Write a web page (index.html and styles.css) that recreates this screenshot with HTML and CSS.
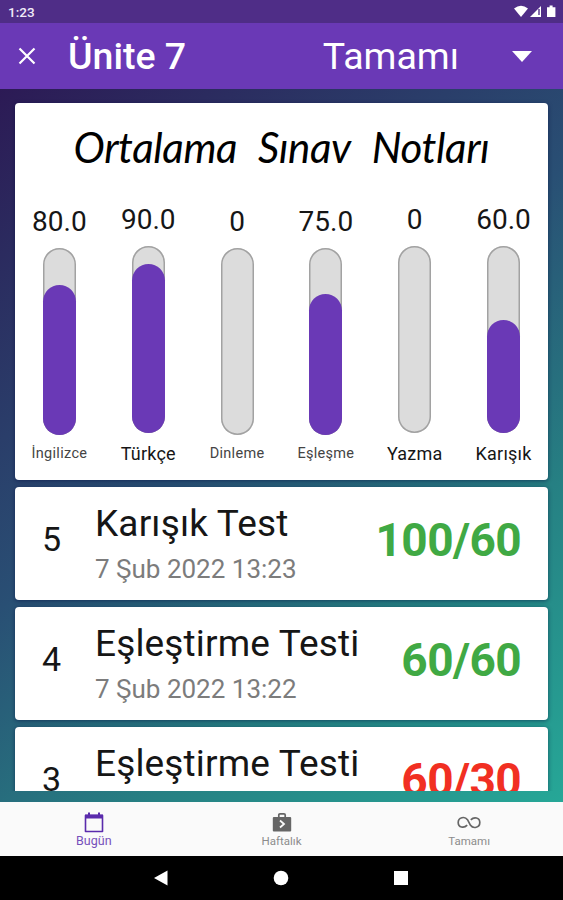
FILE: index.html
```html
<!DOCTYPE html>
<html lang="tr">
<head>
  <meta charset="UTF-8">
  <title>Ünite 7</title>
  <link rel="stylesheet" href="styles.css">
</head>
<body>

  <div class="status-bar">
    <span>1:23</span>
    <svg class="status-icons" width="44" height="16" viewBox="0 0 44 16">
      <path d="M1 4.5Q8 -1 15 4.5L8 13z" fill="#fff"/>
      <path d="M17 13L28 2V13z" fill="#fff"/>
      <path d="M26 5V11" stroke="#4f2d87" stroke-width="1.4"/>
      <path d="M34 3.2h2.6V1.6h3v1.6H42.4V13H34z" fill="#fff"/>
    </svg>
  </div>

  <header class="app-bar">
    <svg class="close" width="18" height="18" viewBox="0 0 18 18">
      <path d="M1.5 1.5L16.5 16.5M16.5 1.5L1.5 16.5" stroke="#fff" stroke-width="2.2"/>
    </svg>
    <h1>Ünite 7</h1>
    <span class="filter">Tamamı</span>
    <svg class="arrow" width="20" height="11" viewBox="0 0 20 11">
      <path d="M0 0H20L10 11z" fill="#fff"/>
    </svg>
  </header>

  <main class="content">
    <div class="list">
      <section class="card chart-card">
        <h2><span>Ortalama</span> <span>Sınav</span> <span>Notları</span></h2>
        <div class="chart">
          <div class="col">
            <span class="value">80.0</span>
            <div class="bar"><div class="fill" style="height:80%"></div></div>
            <span class="label small">İngilizce</span>
          </div>
          <div class="col">
            <span class="value">90.0</span>
            <div class="bar"><div class="fill" style="height:90%"></div></div>
            <span class="label">Türkçe</span>
          </div>
          <div class="col">
            <span class="value">0</span>
            <div class="bar"></div>
            <span class="label small">Dinleme</span>
          </div>
          <div class="col">
            <span class="value">75.0</span>
            <div class="bar"><div class="fill" style="height:75%"></div></div>
            <span class="label small">Eşleşme</span>
          </div>
          <div class="col">
            <span class="value">0</span>
            <div class="bar"></div>
            <span class="label">Yazma</span>
          </div>
          <div class="col">
            <span class="value">60.0</span>
            <div class="bar"><div class="fill" style="height:60%"></div></div>
            <span class="label">Karışık</span>
          </div>
        </div>
      </section>

      <article class="card test">
        <span class="no">5</span>
        <div class="info">
          <h3>Karışık Test</h3>
          <p>7 Şub 2022 13:23</p>
        </div>
        <strong class="score">100/60</strong>
      </article>

      <article class="card test">
        <span class="no">4</span>
        <div class="info">
          <h3>Eşleştirme Testi</h3>
          <p>7 Şub 2022 13:22</p>
        </div>
        <strong class="score">60/60</strong>
      </article>

      <article class="card test">
        <span class="no">3</span>
        <div class="info">
          <h3>Eşleştirme Testi</h3>
        </div>
        <strong class="score fail">60/30</strong>
      </article>
    </div>
  </main>

  <nav class="tabs">
    <div class="tab active">
      <svg width="20" height="22" viewBox="0 0 20 22">
        <path d="M1.5 4.5H18.5V20.5H1.5z" fill="none" stroke="currentColor" stroke-width="1.6" stroke-linejoin="round"/>
        <path d="M1 3.5H19V7.5H1zM4 1.5H6V4H4zM14 1.5H16V4H14z" fill="currentColor"/>
      </svg>
      <span>Bugün</span>
    </div>
    <div class="tab">
      <svg width="20" height="22" viewBox="0 0 20 22">
        <rect x="0.8" y="6" width="18.4" height="14.5" rx="1" fill="currentColor"/>
        <path d="M6.8 6V4Q6.8 2.8 8 2.8H12Q13.2 2.8 13.2 4V6" fill="none" stroke="currentColor" stroke-width="1.7"/>
        <path d="M8 9.5L12 13L8 16.5" fill="none" stroke="#fafafa" stroke-width="1.8"/>
      </svg>
      <span>Haftalık</span>
    </div>
    <div class="tab">
      <svg width="24" height="22" viewBox="0 0 24 22">
        <path d="M10.2 14.2C7 17.6 1.2 16.6 1.2 11.5C1.2 6.2 7.8 5 10.5 8.7L13.5 14.3C16.2 18 22.8 16.8 22.8 11.5C22.8 6.4 17 5.4 13.8 8.8" fill="none" stroke="currentColor" stroke-width="1.7"/>
      </svg>
      <span>Tamamı</span>
    </div>
  </nav>

  <div class="system-nav">
    <svg width="16" height="18" viewBox="0 0 16 18"><path d="M1 9L14.5 1.5V16.5z" fill="#fff"/></svg>
    <svg width="16" height="16" viewBox="0 0 16 16"><circle cx="8" cy="8" r="7.3" fill="#fff"/></svg>
    <svg width="16" height="16" viewBox="0 0 16 16"><rect x="1" y="1" width="14" height="14" fill="#fff"/></svg>
  </div>

</body>
</html>
```
FILE: styles.css
```css
* {
  box-sizing: border-box;
}
body {
  margin: 0;
  height: 900px;
  display: flex;
  flex-direction: column;
  overflow: hidden;
  font-family: Roboto, sans-serif;
  color: #161616;
  background: #000;
}
h1, h2, h3, p {
  margin: 0;
  font-weight: 400;
  white-space: nowrap;
}
svg {
  display: block;
  flex: none;
}

.status-bar {
  height: 23px;
  padding: 1px 6px 0 8px;
  display: flex;
  justify-content: space-between;
  align-items: center;
  background: #4f2d87;
  color: #f0eaf8;
  font-size: 13.5px;
  font-weight: 500;
}
.app-bar {
  height: 66px;
  padding: 0 31px 0 18px;
  display: flex;
  align-items: center;
  background: #6a39b6;
  color: #fff;
}
.app-bar h1 {
  margin-left: 32px;
  font-size: 37.5px;
  font-weight: 500;
}
.filter {
  margin-left: auto;
  font-size: 37.5px;
}
.arrow {
  margin-left: 53px;
}

.content {
  height: 713px;
  padding: 14px 15px 11px;
  background: linear-gradient(142deg, #2c1a55 0%, #294f74 45%, #268083 72%, #26a797 100%);
}
.list {
  height: 688px;
  display: flex;
  flex-direction: column;
  gap: 7px;
  clip-path: inset(-14px -15px 0);
}
.card {
  flex: none;
  background: #fff;
  border-radius: 4px;
  box-shadow: 0 1px 4px rgba(0, 10, 60, 0.5);
}

.chart-card {
  height: 377px;
}
.chart-card h2 {
  height: 90px;
  display: flex;
  justify-content: center;
  gap: 21px;
  font-family: Lato, sans-serif;
  font-style: italic;
  font-size: 42px;
  line-height: 88px;
  letter-spacing: -0.4px;
  color: #000;
}
.chart {
  height: 287px;
  display: flex;
}
.col {
  flex: 1;
  padding-bottom: 7px;
  display: flex;
  flex-direction: column;
  align-items: center;
  justify-content: center;
}
.value {
  font-size: 28px;
  line-height: 34px;
  margin-bottom: 9px;
}
.bar {
  width: 33px;
  height: 187px;
  display: flex;
  align-items: flex-end;
  border-radius: 17px;
  background: #dcdcdc;
  box-shadow: inset 0 0 0 1.5px #a2a2a2;
}
.fill {
  width: 100%;
  border-radius: 17px;
  background: #6a39b6;
}
.label {
  margin-top: 10px;
  font-size: 18px;
  line-height: 21px;
  letter-spacing: 0.2px;
}
.label.small {
  font-size: 14.5px;
  line-height: 17px;
  letter-spacing: 0.3px;
  color: #444;
}

.test {
  height: 113px;
  padding: 0 27px 0 27px;
  display: flex;
  align-items: flex-start;
}
.no {
  width: 53px;
  padding-top: 32px;
  font-size: 34px;
  line-height: 40px;
}
.info {
  padding-top: 15px;
}
.info h3 {
  font-size: 37px;
  line-height: 44px;
  letter-spacing: 0.15px;
}
.info p {
  margin-top: 7px;
  font-size: 26px;
  line-height: 32px;
  color: #7c7c7c;
}
.score {
  margin-left: auto;
  padding-top: 25px;
  font-size: 46px;
  line-height: 56px;
  letter-spacing: -0.6px;
  font-weight: 700;
  color: #40a944;
}
.score.fail {
  color: #f12f22;
}

.tabs {
  height: 54px;
  display: flex;
  background: #fafafa;
  color: #666;
}
.tab {
  flex: 1;
  padding-top: 9px;
  display: flex;
  flex-direction: column;
  align-items: center;
  font-size: 11.5px;
}
.tab span {
  line-height: 16px;
  color: #8c8c8c;
}
.tab.active {
  color: #5a2bac;
}
.tab.active span {
  font-size: 12.5px;
  color: #7650ba;
}

.system-nav {
  height: 44px;
  padding-right: 1px;
  display: flex;
  justify-content: center;
  align-items: center;
  gap: 104px;
  background: #000;
}
```
